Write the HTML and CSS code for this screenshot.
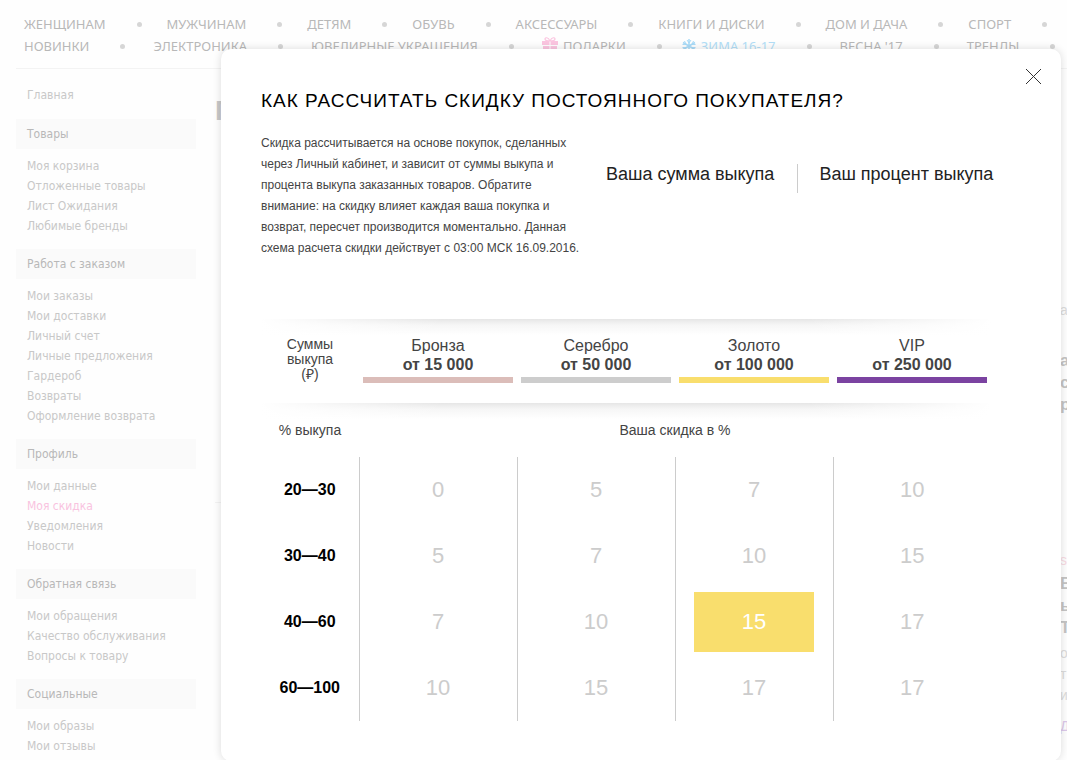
FILE: index.html
```html
<!DOCTYPE html>
<html lang="ru">
<head>
    <meta charset="UTF-8">
    <title>Моя скидка</title>
    <link rel="stylesheet" href="styles.css">
</head>
<body>
    <nav class="top-menu">
        <ul class="menu-row">
            <li><a href="#">ЖЕНЩИНАМ</a></li>
            <li><a href="#">МУЖЧИНАМ</a></li>
            <li><a href="#">ДЕТЯМ</a></li>
            <li><a href="#">ОБУВЬ</a></li>
            <li><a href="#">АКСЕССУАРЫ</a></li>
            <li><a href="#">КНИГИ И ДИСКИ</a></li>
            <li><a href="#">ДОМ И ДАЧА</a></li>
            <li><a href="#">СПОРТ</a></li>
        </ul>
        <ul class="menu-row menu-row-second">
            <li><a href="#">НОВИНКИ</a></li>
            <li><a href="#">ЭЛЕКТРОНИКА</a></li>
            <li><a href="#">ЮВЕЛИРНЫЕ УКРАШЕНИЯ</a></li>
            <li>
                <a href="#">
                    <svg class="icon" width="16" height="20" viewBox="0 0 16 20" fill="#fbc5e0">
                        <path d="M0 5h7.500v4H0zM8.500 5H16v4H8.500zM1 10h6.500v7H1zM8.500 10H15v7H8.500z"/>
                        <path d="M8 5C6 5 3 4.500 3 3S6 .5 8 5zM8 5c2 0 5-.5 5-2s-3-2.500-5 2z" fill="none" stroke="#fbc5e0" stroke-width="1.200"/>
                    </svg>
                    ПОДАРКИ
                </a>
            </li>
            <li>
                <a href="#" class="winter">
                    <svg class="icon" width="14" height="16" viewBox="0 0 14 16" fill="none" stroke="#a9dbf8">
                        <path d="M7 1v14M1 4.500l12 7M13 4.500l-12 7" stroke-width="1.500"/>
                        <path d="M5 2l2 3 2-3M5 14l2-3 2 3M.5 6.500l3.500-.2L2.500 3M13.500 6.500L10 6.300 11.500 3M.5 9.500l3.500.2L2.500 13M13.500 9.500l-3.500.2 1.500 3.300"/>
                    </svg>
                    ЗИМА 16-17
                </a>
            </li>
            <li><a href="#">ВЕСНА '17</a></li>
            <li><a href="#">ТРЕНДЫ</a></li>
        </ul>
    </nav>

    <div class="page">
        <aside class="sidebar">
            <a href="#" class="home">Главная</a>

            <h3>Товары</h3>
            <ul>
                <li><a href="#">Моя корзина</a></li>
                <li><a href="#">Отложенные товары</a></li>
                <li><a href="#">Лист Ожидания</a></li>
                <li><a href="#">Любимые бренды</a></li>
            </ul>

            <h3>Работа с заказом</h3>
            <ul>
                <li><a href="#">Мои заказы</a></li>
                <li><a href="#">Мои доставки</a></li>
                <li><a href="#">Личный счет</a></li>
                <li><a href="#">Личные предложения</a></li>
                <li><a href="#">Гардероб</a></li>
                <li><a href="#">Возвраты</a></li>
                <li><a href="#">Оформление возврата</a></li>
            </ul>

            <h3>Профиль</h3>
            <ul>
                <li><a href="#">Мои данные</a></li>
                <li><a href="#" class="active">Моя скидка</a></li>
                <li><a href="#">Уведомления</a></li>
                <li><a href="#">Новости</a></li>
            </ul>

            <h3>Обратная связь</h3>
            <ul>
                <li><a href="#">Мои обращения</a></li>
                <li><a href="#">Качество обслуживания</a></li>
                <li><a href="#">Вопросы к товару</a></li>
            </ul>

            <h3>Социальные</h3>
            <ul>
                <li><a href="#">Мои образы</a></li>
                <li><a href="#">Мои отзывы</a></li>
            </ul>
        </aside>

        <main class="content">
            <h1>П</h1>
            <hr>
        </main>

        <aside class="promo">
            <p>а</p>
            <h4>а<br>с<br>р</h4>
            <p class="sale">s</p>
            <h4>В<br>ь<br>Т</h4>
            <p>о<br>т<br>и</p>
            <a href="#">Д</a>
        </aside>
    </div>

    <div class="modal" role="dialog" aria-labelledby="modal-title">
        <button type="button" class="close" aria-label="Закрыть">
            <svg width="15" height="15" viewBox="0 0 15 15" stroke="#333" fill="none">
                <path d="M0 0l15 15M15 0L0 15"/>
            </svg>
        </button>

        <h2 id="modal-title">КАК РАССЧИТАТЬ СКИДКУ ПОСТОЯННОГО ПОКУПАТЕЛЯ?</h2>

        <div class="intro">
            <p>Скидка рассчитывается на основе покупок, сделанных через Личный кабинет, и зависит от суммы выкупа и процента выкупа заказанных товаров. Обратите внимание: на скидку влияет каждая ваша покупка и возврат, пересчет производится моментально. Данная схема расчета скидки действует с 03:00 МСК 16.09.2016.</p>
            <div class="totals">
                <span>Ваша сумма выкупа</span>
                <span>Ваш процент выкупа</span>
            </div>
        </div>

        <table class="discounts">
            <thead>
                <tr class="levels">
                    <th class="first">Суммы<br>выкупа<br>(₽)</th>
                    <th>Бронза<b>от 15 000</b><i class="bar bronze"></i></th>
                    <th>Серебро<b>от 50 000</b><i class="bar silver"></i></th>
                    <th>Золото<b>от 100 000</b><i class="bar gold"></i></th>
                    <th>VIP<b>от 250 000</b><i class="bar vip"></i></th>
                </tr>
                <tr class="captions">
                    <th>% выкупа</th>
                    <th colspan="4">Ваша скидка в %</th>
                </tr>
            </thead>
            <tbody>
                <tr><th>20—30</th><td>0</td><td>5</td><td>7</td><td>10</td></tr>
                <tr><th>30—40</th><td>5</td><td>7</td><td>10</td><td>15</td></tr>
                <tr><th>40—60</th><td>7</td><td>10</td><td><span class="current">15</span></td><td>17</td></tr>
                <tr><th>60—100</th><td>10</td><td>15</td><td>17</td><td>17</td></tr>
            </tbody>
        </table>
    </div>
</body>
</html>
```
FILE: styles.css
```css
* {
    box-sizing: border-box;
}

body {
    margin: 0;
    height: 100vh;
    overflow: hidden;
    position: relative;
    background-color: #fefefe;
    font-family: "Noto Sans", Tahoma, sans-serif;
    font-size: 12px;
    color: #c8c8c8;
}

a {
    color: inherit;
    text-decoration: none;
}

ul {
    list-style: none;
    margin: 0;
    padding: 0;
}

/* top menu */
.top-menu {
    margin-left: 16px;
    padding: 13px 0 11px 8px;
    border-bottom: 1px solid #f3f3f3;
}

.menu-row {
    display: flex;
    gap: 25px;
    font-size: 13px;
    line-height: 22px;
    color: #b8b8b8;
    white-space: nowrap;
}

.menu-row-second {
    gap: 28px;
}

.menu-row li,
.menu-row a {
    display: flex;
    align-items: center;
}

.menu-row li::after {
    content: "";
    width: 5px;
    height: 5px;
    margin-left: 31px;
    border-radius: 50%;
    background-color: #d6d6d6;
}

.icon {
    margin-right: 5px;
}

.winter {
    margin-left: -8px;
    color: #b3def7;
}

/* page behind the popup */
.page {
    display: flex;
}

.sidebar {
    width: 180px;
    margin-left: 16px;
    flex-shrink: 0;
    font-family: "DejaVu Sans Condensed", Tahoma, sans-serif;
    line-height: 20px;
}

.home {
    display: block;
    padding: 16px 11px 14px;
}

.sidebar h3 {
    margin: 0;
    padding: 0 11px;
    background-color: #fafafa;
    color: #b8b8b8;
    font-size: 12px;
    font-weight: normal;
    line-height: 30px;
}

.sidebar ul {
    padding: 7px 11px 13px;
}

.sidebar .active {
    color: #f9c3e0;
}

.content {
    flex: 1;
    margin-left: 19px;
}

.content h1 {
    margin: 22px 0 0;
    height: 411px;
    font-family: "Liberation Sans", Arial, sans-serif;
    font-size: 28px;
    line-height: 40px;
}

.content hr {
    margin: 0;
    border: 0;
    border-top: 1px solid #f3f3f3;
}

.promo {
    width: 7px;
    padding-top: 231px;
    font-family: "Liberation Sans", Arial, sans-serif;
    font-size: 14px;
    line-height: 21px;
    color: #dcdcdc;
}

.promo p {
    margin: 0 0 29px;
}

.promo h4 {
    margin: 0 0 134px;
    font-size: 17px;
    line-height: 22px;
    color: #c4c4c4;
}

.promo .sale {
    margin: 0;
    color: #f7dbe3;
}

.promo .sale + h4 {
    margin: 2px 0 4px;
}

.promo .sale ~ p {
    margin-bottom: 10px;
}

.promo a {
    color: #dcc8ea;
    text-decoration: underline;
}

/* popup */
.modal {
    position: absolute;
    top: 49px;
    left: 221px;
    right: 6px;
    padding: 40px;
    border-radius: 10px;
    background-color: #fff;
    box-shadow: 0 0 8px rgba(0, 0, 0, 0.14);
    font-family: "Liberation Sans", Arial, sans-serif;
    color: #444;
}

.close {
    position: absolute;
    top: 20px;
    right: 20px;
    padding: 0;
    border: none;
    background: none;
    line-height: 0;
    cursor: pointer;
}

.modal h2 {
    margin: 0 0 20px;
    color: #000;
    font-size: 19px;
    font-weight: normal;
    line-height: 24px;
    letter-spacing: 1px;
}

.intro {
    display: flex;
    gap: 22px;
    min-height: 186px;
}

.intro p {
    width: 323px;
    margin: 0;
    flex-shrink: 0;
    font-size: 12px;
    line-height: 21px;
}

.totals {
    display: flex;
    align-items: flex-start;
    margin-top: 31px;
    color: #222;
    font-size: 18px;
    line-height: 20px;
    white-space: nowrap;
}

.totals span + span {
    margin-left: 23px;
    padding: 0 0 9px 21px;
    border-left: 1px solid #ccc;
}

.discounts {
    width: 730px;
    table-layout: fixed;
    border-collapse: collapse;
}

.discounts th,
.discounts td {
    padding: 0;
    text-align: center;
}

.levels,
.captions {
    background-image:
        linear-gradient(to right, #fff, transparent 25%, transparent 75%, #fff),
        linear-gradient(#e6e6e6, #f6f6f6 6px, #fff 16px);
}

.levels th {
    width: 158px;
    height: 84px;
    padding-bottom: 4px;
    font-size: 16px;
    font-weight: normal;
    line-height: 19px;
}

.levels .first {
    width: 98px;
    font-size: 14px;
    line-height: 15px;
}

.levels b {
    display: block;
}

.bar {
    display: block;
    height: 6px;
    margin: 3px 4px 0;
}

.bronze {
    background-color: #dbbdb9;
}

.silver {
    background-color: #cdcdcd;
}

.gold {
    background-color: #f9de6d;
}

.vip {
    background-color: #7b43a1;
}

.captions th {
    height: 54px;
    font-size: 14px;
    font-weight: normal;
}

.discounts tbody th {
    color: #000;
    font-size: 16px;
}

.discounts tbody td {
    height: 66px;
    border-left: 1px solid #ccc;
    color: #ccc;
    font-size: 22px;
}

.current {
    display: block;
    width: 120px;
    margin: 0 auto;
    background-color: #f9de6d;
    color: #fff;
    line-height: 60px;
}
```
